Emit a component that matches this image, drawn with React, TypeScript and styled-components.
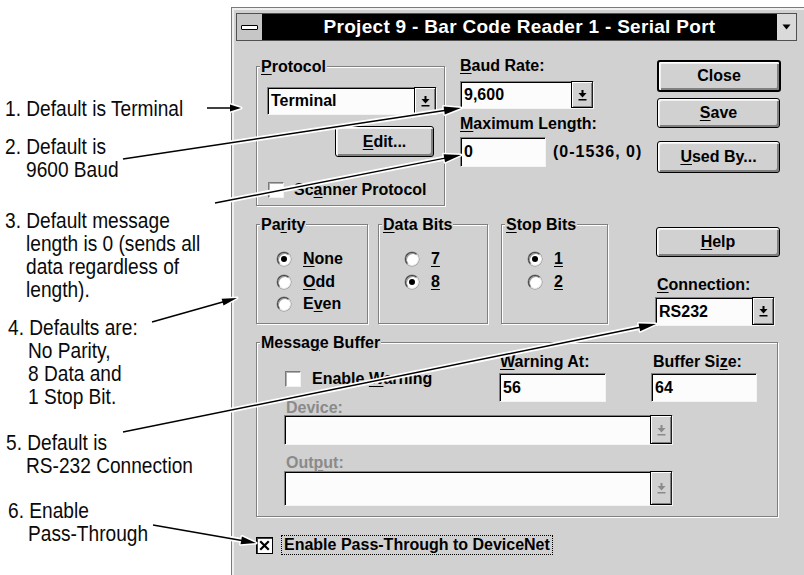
import React from "react";
import styled, { createGlobalStyle } from "styled-components";

const GRAY = "#d1d1d1";
const DARK = "#808080";
const NOTE_SCALE = 0.85;

const Global = createGlobalStyle`
  html, body { margin: 0; padding: 0; background: #fff; }
  body { width: 804px; height: 575px; overflow: hidden; }
`;

const Page = styled.div`
  position: relative;
  display: flex;
  align-items: flex-start;
  width: 804px;
  height: 575px;
  background: #fff;
  overflow: hidden;
`;

/* ---------- annotations ---------- */
const Notes = styled.div`
  width: 231px;
  flex: none;
  display: flex;
  flex-direction: column;
  font-family: "Liberation Sans", Arial, sans-serif;
  font-size: 22.5px;
  line-height: 23px;
  color: #0a0a0a;
`;

const Note = styled.div<{ $top: number; $num: number; $text: number }>`
  margin-top: ${(p) => p.$top}px;
  margin-left: ${(p) => p.$num}px;
  padding-left: ${(p) => (p.$text - p.$num) / NOTE_SCALE}px;
  text-indent: ${(p) => (p.$num - p.$text) / NOTE_SCALE}px;
  white-space: nowrap;
  transform: scaleX(${NOTE_SCALE});
  transform-origin: 0 0;
`;

/* ---------- dialog frame ---------- */
const Dialog = styled.div`
  flex: none;
  width: 573px;
  height: 580px;
  margin-top: 7px;
  box-sizing: border-box;
  background: ${GRAY};
  border-top: 1px solid #7a7a7a;
  border-left: 1px solid #7a7a7a;
  box-shadow: inset 2px 2px 0 #efefef;
  padding: 5px 0 0 4px;
  font-family: "Liberation Sans", Arial, sans-serif;
  font-weight: bold;
  font-size: 16px;
  color: #000;
`;

const TitleBar = styled.div`
  display: flex;
  width: 561px;
  height: 28px;
  box-sizing: border-box;
  border: 1px solid #505050;
`;

const SysBox = styled.div`
  width: 25px;
  flex: none;
  background: #c6c6c6;
  border-right: 1px solid #000;
  display: flex;
  align-items: center;
  justify-content: center;
`;

const SysBar = styled.span`
  width: 15px;
  height: 3px;
  background: #fff;
  border: 1px solid #000;
  border-radius: 1px;
`;

const TitleText = styled.div`
  flex: 1;
  background: #000;
  color: #fff;
  display: flex;
  align-items: center;
  justify-content: center;
  font-size: 19px;
  letter-spacing: 0.3px;
  white-space: nowrap;
`;

const MaxBox = styled.div`
  width: 19px;
  flex: none;
  background: #dadada;
  border-left: 1px solid #000;
  display: flex;
  align-items: center;
  justify-content: center;
`;

const Body = styled.div`
  display: flex;
  flex-direction: column;
  padding: 13px 0 0 20px;
`;

const Row = styled.div<{ $mt?: number }>`
  display: flex;
  align-items: flex-start;
  margin-top: ${(p) => p.$mt ?? 0}px;
`;

const Col = styled.div<{ $w?: number; $mt?: number; $ml?: number }>`
  display: flex;
  flex-direction: column;
  align-items: flex-start;
  flex: none;
  ${(p) => (p.$w ? `width: ${p.$w}px;` : "")}
  margin-top: ${(p) => p.$mt ?? 0}px;
  margin-left: ${(p) => p.$ml ?? 0}px;
`;

/* ---------- group box ---------- */
const GroupBox = styled.div<{ $w: number; $h: number; $mt?: number; $ml?: number }>`
  position: relative;
  flex: none;
  box-sizing: border-box;
  width: ${(p) => p.$w}px;
  height: ${(p) => p.$h}px;
  margin-top: ${(p) => p.$mt ?? 0}px;
  margin-left: ${(p) => p.$ml ?? 0}px;
  border: 1px solid ${DARK};
  box-shadow: 1px 1px 0 #fff, inset 1px 1px 0 #fff;
`;

const Caption = styled.span`
  position: absolute;
  left: 3px;
  top: -9px;
  padding: 0 1px;
  background: ${GRAY};
  line-height: 18px;
  white-space: nowrap;
`;

const GroupInner = styled.div<{ $pt: number; $pl: number }>`
  display: flex;
  flex-direction: column;
  align-items: flex-start;
  padding: ${(p) => p.$pt}px 0 0 ${(p) => p.$pl}px;
`;

/* ---------- controls ---------- */
const Label = styled.div<{ $mt?: number; $ml?: number; $disabled?: boolean; $lh?: number }>`
  line-height: ${(p) => p.$lh ?? 18}px;
  margin-top: ${(p) => p.$mt ?? 0}px;
  margin-left: ${(p) => p.$ml ?? 0}px;
  color: ${(p) => (p.$disabled ? "#8a8a8a" : "#000")};
  white-space: nowrap;
`;

const U = styled.span`
  text-decoration: underline;
  text-underline-offset: 2px;
`;

const Sunken = styled.div<{ $w: number; $h: number; $mt?: number; $ml?: number }>`
  display: flex;
  align-items: stretch;
  flex: none;
  box-sizing: border-box;
  width: ${(p) => p.$w}px;
  height: ${(p) => p.$h}px;
  margin-top: ${(p) => p.$mt ?? 0}px;
  margin-left: ${(p) => p.$ml ?? 0}px;
  background: #fcfcfc;
  border-top: 1px solid #808080;
  border-left: 1px solid #808080;
  border-bottom: 1px solid #f4f4f4;
  border-right: 1px solid #f4f4f4;
  box-shadow: inset 1px 1px 0 #000;
`;

const FieldText = styled.div`
  flex: 1;
  display: flex;
  align-items: center;
  padding-left: 3px;
  white-space: nowrap;
`;

const DropBtn = styled.div<{ $disabled?: boolean }>`
  width: 22px;
  flex: none;
  box-sizing: border-box;
  margin: -1px 0 0 0;
  background: ${GRAY};
  border: 1px solid #000;
  border-right-color: #202020;
  box-shadow: inset 1px 1px 0 #fff, inset -1px -1px 0 ${DARK};
  display: flex;
  align-items: center;
  justify-content: center;
  color: ${(p) => (p.$disabled ? "#8a8a8a" : "#000")};
`;

const Button = styled.div<{ $w: number; $h: number; $mt?: number; $ml?: number; $default?: boolean }>`
  flex: none;
  box-sizing: border-box;
  width: ${(p) => p.$w}px;
  height: ${(p) => p.$h}px;
  margin-top: ${(p) => p.$mt ?? 0}px;
  margin-left: ${(p) => p.$ml ?? 0}px;
  display: flex;
  align-items: center;
  justify-content: center;
  background: ${GRAY};
  border: ${(p) => (p.$default ? 2 : 1)}px solid #000;
  border-radius: 3px;
  box-shadow: inset 1px 1px 0 #fff, inset 2px 2px 0 #f0f0f0, inset -2px -2px 0 ${DARK};
  white-space: nowrap;
`;

const RadioList = styled.div<{ $pt: number; $pl: number }>`
  display: flex;
  flex-direction: column;
  padding: ${(p) => p.$pt}px 0 0 ${(p) => p.$pl}px;
`;

const RadioRow = styled.div`
  display: flex;
  align-items: center;
  gap: 12px;
  height: 22.5px;
  white-space: nowrap;
`;

const RadioCircle = styled.span<{ $on: boolean }>`
  flex: none;
  box-sizing: border-box;
  width: 14px;
  height: 14px;
  border-radius: 50%;
  background: #fff;
  border: 1px solid;
  border-color: #404040 #e8e8e8 #e8e8e8 #404040;
  box-shadow: inset 1px 1px 0 #9a9a9a, 0 0 0 0.5px #8a8a8a;
  display: flex;
  align-items: center;
  justify-content: center;
  &::after {
    content: "";
    display: ${(p) => (p.$on ? "block" : "none")};
    width: 6px;
    height: 6px;
    border-radius: 50%;
    background: #000;
  }
`;

const CheckRow = styled.div<{ $mt?: number; $ml?: number; $gap: number }>`
  display: flex;
  align-items: center;
  gap: ${(p) => p.$gap}px;
  margin-top: ${(p) => p.$mt ?? 0}px;
  margin-left: ${(p) => p.$ml ?? 0}px;
  white-space: nowrap;
`;

const CheckBox = styled.span<{ $size: number; $strong?: boolean }>`
  flex: none;
  box-sizing: border-box;
  width: ${(p) => p.$size}px;
  height: ${(p) => p.$size}px;
  background: #fff;
  border: 1px solid;
  border-color: ${(p) => (p.$strong ? "#000" : "#7a7a7a #f2f2f2 #f2f2f2 #7a7a7a")};
  box-shadow: ${(p) => (p.$strong ? "inset 1px 1px 0 #404040" : "inset 1px 1px 0 #b0b0b0")};
  display: flex;
  align-items: center;
  justify-content: center;
`;

const FocusText = styled.span`
  border: 1px dotted #000;
  padding: 0 2px;
  line-height: 18px;
`;

const Range = styled.span`
  margin-left: 7px;
  align-self: center;
  letter-spacing: 1px;
  white-space: nowrap;
`;

const BufferGrid = styled.div`
  display: grid;
  grid-template-columns: 215px 152px 106px;
  align-items: start;
`;

const Overlay = styled.svg`
  position: absolute;
  left: 0;
  top: 0;
  pointer-events: none;
`;

/* ---------- small drawings ---------- */
const DropArrow = () => (
  <svg width="9" height="12" viewBox="0 0 9 12">
    <rect x="3.5" y="1" width="2" height="3" fill="currentColor" />
    <polygon points="0.5,4 8.5,4 4.5,8.5" fill="currentColor" />
    <rect x="0.5" y="10" width="8" height="1.5" fill="currentColor" />
  </svg>
);

const XMark = () => (
  <svg width="11" height="11" viewBox="0 0 11 11">
    <path d="M2 2 L9 9 M9 2 L2 9" stroke="#000" strokeWidth="2.2" strokeLinecap="square" />
  </svg>
);

const Combo = ({
  w,
  h,
  mt,
  ml,
  value,
  disabled,
}: {
  w: number;
  h: number;
  mt?: number;
  ml?: number;
  value?: string;
  disabled?: boolean;
}) => (
  <Sunken $w={w} $h={h} $mt={mt} $ml={ml}>
    <FieldText>{value}</FieldText>
    <DropBtn $disabled={disabled}>
      <DropArrow />
    </DropBtn>
  </Sunken>
);

type ArrowSpec = { x1: number; y1: number; x2: number; y2: number; len: number; w: number };

const arrows: ArrowSpec[] = [
  { x1: 207, y1: 108, x2: 241, y2: 108, len: 11, w: 3.5 },
  { x1: 123, y1: 159, x2: 461, y2: 108, len: 17, w: 4 },
  { x1: 215, y1: 203, x2: 461, y2: 155, len: 17, w: 4 },
  { x1: 152, y1: 322, x2: 237, y2: 298, len: 15, w: 3.5 },
  { x1: 123, y1: 432, x2: 656, y2: 324, len: 17, w: 4 },
  { x1: 153, y1: 525, x2: 256, y2: 543, len: 15, w: 4 },
];

const geo = (a: ArrowSpec) => {
  const dx = a.x2 - a.x1;
  const dy = a.y2 - a.y1;
  const L = Math.hypot(dx, dy);
  const ux = dx / L;
  const uy = dy / L;
  const bx = a.x2 - ux * a.len;
  const by = a.y2 - uy * a.len;
  const px = -uy;
  const py = ux;
  const pts = `${a.x2},${a.y2} ${bx + px * a.w},${by + py * a.w} ${bx - px * a.w},${by - py * a.w}`;
  return { bx: bx + ux * 2, by: by + uy * 2, pts };
};

const Arrows = () => (
  <Overlay width={804} height={575} viewBox="0 0 804 575">
    {arrows.map((a, i) => {
      const g = geo(a);
      return (
        <g key={"h" + i}>
          <line x1={a.x1} y1={a.y1} x2={g.bx} y2={g.by} stroke="#fff" strokeWidth={5} />
          <polygon points={g.pts} fill="#fff" stroke="#fff" strokeWidth={3} strokeLinejoin="round" />
        </g>
      );
    })}
    {arrows.map((a, i) => {
      const g = geo(a);
      return (
        <g key={"a" + i}>
          <line x1={a.x1} y1={a.y1} x2={g.bx} y2={g.by} stroke="#000" strokeWidth={1.5} />
          <polygon points={g.pts} fill="#000" />
        </g>
      );
    })}
  </Overlay>
);

export default function App() {
  return (
    <>
      <Global />
      <Page>
        <Notes>
          <Note $top={97} $num={5} $text={26}>1. Default is Terminal</Note>
          <Note $top={14.5} $num={5} $text={26}>
            2. Default is
            <br />
            9600 Baud
          </Note>
          <Note $top={28} $num={5} $text={26}>
            3. Default message
            <br />
            length is 0 (sends all
            <br />
            data regardless of
            <br />
            length).
          </Note>
          <Note $top={15} $num={8} $text={28}>
            4. Defaults are:
            <br />
            No Parity,
            <br />
            8 Data and
            <br />1 Stop Bit.
          </Note>
          <Note $top={23} $num={6} $text={26}>
            5. Default is
            <br />
            RS-232 Connection
          </Note>
          <Note $top={22} $num={8} $text={28}>
            6. Enable
            <br />
            Pass-Through
          </Note>
        </Notes>

        <Dialog>
          <TitleBar>
            <SysBox>
              <SysBar />
            </SysBox>
            <TitleText>Project 9 - Bar Code Reader 1 - Serial Port</TitleText>
            <MaxBox>
              <svg width="9" height="6" viewBox="0 0 9 6">
                <polygon points="0.5,0.5 8.5,0.5 4.5,5.5" fill="#000" />
              </svg>
            </MaxBox>
          </TitleBar>

          <Body>
            <Row>
              <GroupBox $w={189} $h={140} $mt={12}>
                <Caption>
                  <U>P</U>rotocol
                </Caption>
                <GroupInner $pt={20} $pl={10}>
                  <Combo w={170} h={28} value="Terminal" />
                  <Button $w={99} $h={31} $mt={11} $ml={68}>
                    <U>E</U>dit...
                  </Button>
                  <CheckRow $mt={24} $ml={1} $gap={10}>
                    <CheckBox $size={16} />
                    <span>
                      Sc<U>a</U>nner Protocol
                    </span>
                  </CheckRow>
                </GroupInner>
              </GroupBox>

              <Col $w={197} $ml={15}>
                <Label $mt={3}>
                  <U>B</U>aud Rate:
                </Label>
                <Combo w={134} h={28} mt={6} value="9,600" />
                <Label $mt={6}>
                  <U>M</U>aximum Length:
                </Label>
                <Row $mt={4}>
                  <Sunken $w={86} $h={30}>
                    <FieldText>0</FieldText>
                  </Sunken>
                  <Range>(0-1536, 0)</Range>
                </Row>
              </Col>

              <Col $w={124} $mt={6}>
                <Button $w={124} $h={32} $default>
                  Close
                </Button>
                <Button $w={123} $h={30} $mt={6}>
                  <U>S</U>ave
                </Button>
                <Button $w={123} $h={32} $mt={13}>
                  <U>U</U>sed By...
                </Button>
              </Col>
            </Row>

            <Row $mt={18}>
              <GroupBox $w={112} $h={100}>
                <Caption>
                  Pa<U>r</U>ity
                </Caption>
                <RadioList $pt={22.75} $pl={20}>
                  <RadioRow>
                    <RadioCircle $on />
                    <span>
                      <U>N</U>one
                    </span>
                  </RadioRow>
                  <RadioRow>
                    <RadioCircle $on={false} />
                    <span>
                      <U>O</U>dd
                    </span>
                  </RadioRow>
                  <RadioRow>
                    <RadioCircle $on={false} />
                    <span>
                      E<U>v</U>en
                    </span>
                  </RadioRow>
                </RadioList>
              </GroupBox>

              <GroupBox $w={110} $h={100} $ml={10}>
                <Caption>
                  <U>D</U>ata Bits
                </Caption>
                <RadioList $pt={22.75} $pl={26}>
                  <RadioRow>
                    <RadioCircle $on={false} />
                    <U>7</U>
                  </RadioRow>
                  <RadioRow>
                    <RadioCircle $on />
                    <U>8</U>
                  </RadioRow>
                </RadioList>
              </GroupBox>

              <GroupBox $w={107} $h={100} $ml={13}>
                <Caption>
                  <U>S</U>top Bits
                </Caption>
                <RadioList $pt={22.75} $pl={26}>
                  <RadioRow>
                    <RadioCircle $on />
                    <U>1</U>
                  </RadioRow>
                  <RadioRow>
                    <RadioCircle $on={false} />
                    <U>2</U>
                  </RadioRow>
                </RadioList>
              </GroupBox>

              <Col $ml={48} $mt={3}>
                <Button $w={124} $h={30}>
                  <U>H</U>elp
                </Button>
                <Label $mt={19} $ml={1}>
                  <U>C</U>onnection:
                </Label>
                <Combo w={120} h={29} mt={3} ml={-1} value="RS232" />
              </Col>
            </Row>

            <Row $mt={16}>
              <GroupBox $w={522} $h={175}>
                <Caption>
                  Messa<U>g</U>e Buffer
                </Caption>
                <GroupInner $pt={10} $pl={27}>
                  <BufferGrid>
                    <CheckRow $mt={17} $ml={1} $gap={11}>
                      <CheckBox $size={16} />
                      <span>
                        Enable <U>W</U>arning
                      </span>
                    </CheckRow>
                    <Col>
                      <Label $ml={1}>
                        <U>W</U>arning At:
                      </Label>
                      <Sunken $w={107} $h={29} $mt={2}>
                        <FieldText>56</FieldText>
                      </Sunken>
                    </Col>
                    <Col>
                      <Label $ml={2}>
                        Buffer Si<U>z</U>e:
                      </Label>
                      <Sunken $w={106} $h={29} $mt={2}>
                        <FieldText>64</FieldText>
                      </Sunken>
                    </Col>
                  </BufferGrid>
                  <Label $mt={-1} $ml={2} $lh={14} $disabled>
                    De<U>v</U>ice:
                  </Label>
                  <Combo w={389} h={30} disabled />
                  <Label $mt={11} $ml={2} $lh={14} $disabled>
                    Out<U>p</U>ut:
                  </Label>
                  <Combo w={389} h={35} mt={1} disabled />
                </GroupInner>
              </GroupBox>
            </Row>

            <Row $mt={18}>
              <CheckRow $gap={8}>
                <CheckBox $size={17} $strong>
                  <XMark />
                </CheckBox>
                <FocusText>Enable Pass-Through to DeviceNet</FocusText>
              </CheckRow>
            </Row>
          </Body>
        </Dialog>
        <Arrows />
      </Page>
    </>
  );
}
